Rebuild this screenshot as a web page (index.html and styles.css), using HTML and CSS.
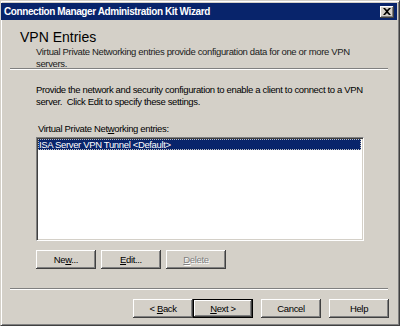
FILE: index.html
```html
<!DOCTYPE html>
<html lang="en">
<head>
  <meta charset="UTF-8">
  <title>Connection Manager Administration Kit Wizard</title>
  <link rel="stylesheet" href="styles.css">
</head>
<body>
  <div class="window">
    <div class="titlebar">
      <span class="title">Connection Manager Administration Kit Wizard</span>
      <button class="close" tabindex="-1">
        <svg viewBox="0 0 8 7" width="8" height="7">
          <path d="M0 0h2l2 2 2-2h2L5 3.5 8 7H6L4 5 2 7H0l3-3.5z" fill="#000"/>
        </svg>
      </button>
    </div>

    <div class="header">
      <h1>VPN Entries</h1>
      <p>Virtual Private Networking entries provide configuration data for one or more VPN servers.</p>
    </div>
    <div class="sep"></div>

    <div class="content">
      <p class="intro">Provide the network and security configuration to enable a client to connect to a VPN server.&nbsp; Click Edit to specify these settings.</p>
      <label class="list-label">Virtual Private Net<u>w</u>orking entries:</label>
      <div class="listbox">
        <div class="item selected">ISA Server VPN Tunnel &lt;Default&gt;</div>
      </div>
      <div class="list-actions">
        <button class="btn">Ne<u>w</u>...</button>
        <button class="btn"><u>E</u>dit...</button>
        <button class="btn" disabled><u>D</u>elete</button>
      </div>
    </div>

    <div class="sep"></div>

    <div class="footer">
      <div class="nav">
        <button class="btn">&lt; <u>B</u>ack</button>
        <button class="btn default"><u>N</u>ext &gt;</button>
      </div>
      <button class="btn">Cancel</button>
      <button class="btn">Help</button>
    </div>
  </div>
</body>
</html>
```

FILE: styles.css
```css
* {
  margin: 0;
  padding: 0;
  box-sizing: border-box;
}

body {
  width: 400px;
  height: 326px;
  overflow: hidden;
  background: #d4d0c8;
  font-family: "Liberation Sans", Arial, sans-serif;
  font-size: 9.5px;
  letter-spacing: -0.35px;
  color: #000;
}

u {
  text-decoration: underline;
  text-underline-offset: 1px;
}

.window {
  height: 326px;
  background: #d4d0c8;
  border-top: 1px solid #d4d0c8;
  border-left: 1px solid #d4d0c8;
  border-right: 1px solid #404040;
  border-bottom: 1px solid #404040;
  box-shadow: inset 1px 1px 0 #fff, inset -1px -1px 0 #808080;
  padding: 2px 3px 0 3px;
}

.titlebar {
  height: 17px;
  margin: 0 -1px 0 -3px;
  background: #08246b;
  display: flex;
  align-items: center;
  justify-content: space-between;
  padding: 0 3px 0 3px;
}

.title {
  color: #fff;
  font-weight: bold;
  font-size: 10px;
  letter-spacing: -0.4px;
}

.close {
  width: 14px;
  height: 12px;
  background: #d4d0c8;
  border: none;
  box-shadow: inset -1px -1px 0 #404040, inset 1px 1px 0 #fff, inset -2px -2px 0 #808080;
  display: flex;
  align-items: center;
  justify-content: center;
  padding: 0 1px 1px 0;
}

.header {
  padding: 10px 0 0 16px;
  height: 48px;
}

.header h1 {
  font-size: 14px;
  font-weight: normal;
  letter-spacing: 0;
  line-height: 14px;
  margin-bottom: 2px;
}

.header p {
  padding-left: 16px;
  width: 340px;
  line-height: 12px;
  color: #202020;
}

.sep {
  height: 2px;
  margin: 0 8px 0 6px;
  border-top: 1px solid #808080;
  border-bottom: 1px solid #fff;
}

.content {
  padding: 14px 0 0 32px;
  height: 218px;
}

.intro {
  width: 330px;
  line-height: 12px;
  margin-bottom: 15px;
}

.list-label {
  display: block;
  line-height: 12px;
  margin: 0 0 2px 2px;
}

.listbox {
  width: 328px;
  height: 104px;
  background: #fff;
  border-top: 1px solid #808080;
  border-left: 1px solid #808080;
  border-right: 1px solid #fff;
  border-bottom: 1px solid #fff;
  box-shadow: inset 1px 1px 0 #404040, inset -1px -1px 0 #d4d0c8;
  padding: 1px 2px 2px 1px;
}

.item {
  height: 11px;
  line-height: 11px;
  padding-left: 1px;
  white-space: nowrap;
}

.item.selected {
  background: #08246b;
  color: #fff;
  outline: 1px dotted #c0c0c0;
  outline-offset: -1px;
}

.list-actions {
  display: flex;
  gap: 5px;
  margin-top: 9px;
}

.btn {
  width: 60px;
  height: 19px;
  background: #d4d0c8;
  border: none;
  font-family: inherit;
  font-size: 9.5px;
  letter-spacing: -0.35px;
  color: #000;
  box-shadow: inset -1px -1px 0 #404040, inset 1px 1px 0 #fff, inset -2px -2px 0 #808080;
}

.btn:disabled {
  color: #808080;
  text-shadow: 1px 1px 0 #fff;
}

.btn.default {
  outline: 1px solid #000;
  outline-offset: -1px;
  box-shadow: inset -2px -2px 0 #404040, inset 2px 2px 0 #fff, inset -3px -3px 0 #808080;
}

.footer {
  display: flex;
  justify-content: flex-end;
  gap: 8px;
  padding: 9px 7px 0 0;
}

.nav {
  display: flex;
}
```
